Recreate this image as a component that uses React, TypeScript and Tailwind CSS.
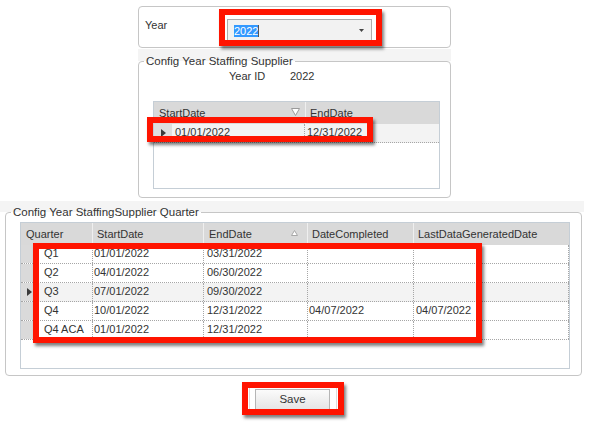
import React from 'react';

const rows = [
  { q: 'Q1', start: '01/01/2022', end: '03/31/2022', done: '', gen: '' },
  { q: 'Q2', start: '04/01/2022', end: '06/30/2022', done: '', gen: '' },
  { q: 'Q3', start: '07/01/2022', end: '09/30/2022', done: '', gen: '', focused: true },
  { q: 'Q4', start: '10/01/2022', end: '12/31/2022', done: '04/07/2022', gen: '04/07/2022' },
  { q: 'Q4 ACA', start: '01/01/2022', end: '12/31/2022', done: '', gen: '' },
];

function RowArrow() {
  return (
    <svg width="5" height="8" viewBox="0 0 5 8">
      <polygon points="0,0 5,4 0,8" fill="#3a3a3a" />
    </svg>
  );
}

function RedBox({ className }: { className: string }) {
  return (
    <div
      className={`absolute border-[6px] border-[#ff1400] shadow-[2px_3px_3px_rgba(0,0,0,0.5)] pointer-events-none ${className}`}
    />
  );
}

const cell = 'h-full border-r border-dotted border-[#a6a6a6] leading-[14px] pt-[1px] whitespace-nowrap overflow-hidden';
const head = 'h-full border-r border-[#efefef] leading-[14px] pt-[4px] whitespace-nowrap relative';

export default function App() {
  return (
    <div className="relative w-[591px] h-[425px] bg-white overflow-hidden text-[11px] text-[#333] font-['Liberation_Sans',Arial,sans-serif]">
      {/* Year selector */}
      <div className="ml-[138px] mt-[6px] w-[313px] h-[42px] border border-[#c6c6c6] rounded-[4px] flex items-start pt-[12px] pl-[6px]">
        <span className="w-[82px] leading-[13px]">Year</span>
        <div className="w-[145px] h-[23px] border border-[#acacac] bg-[#f2f2f2] flex items-center pl-[6px]">
          <span className="bg-[#3399ff] text-white leading-[12px] h-[12px]">2022</span>
          <span className="w-px h-[12px] bg-[#555]" />
          <svg className="ml-auto mr-[7px]" width="5" height="3" viewBox="0 0 5 3">
            <polygon points="0,0 5,0 2.5,3" fill="#444" />
          </svg>
        </div>
      </div>

      {/* Config Year Staffing Supplier */}
      <div className="ml-[138px] mt-px w-[313px] pt-[5px] bg-[linear-gradient(to_bottom,#f4f4f4_12px,#fff_12px)]">
        <fieldset className="m-0 p-0 pb-[8px] border border-[#c6c6c6] rounded-[4px] bg-white min-w-0">
          <legend className="ml-[5px] px-[2px] text-[11.5px] leading-[14px]">Config Year Staffing Supplier</legend>
          <div className="flex mt-[2px] ml-[90px] leading-[13px]">
            <span className="w-[61px]">Year ID</span>
            <span>2022</span>
          </div>
          <div className="ml-[14px] mt-[18px] w-[287px] h-[88px] border border-[#c5ced6]">
            <div className="flex h-[22px] bg-[#d9d9d9]">
              <div className={`${head} w-[152px] pl-[5px]`}>
                StartDate
                <svg className="absolute right-[5px] top-[6px]" width="9" height="8" viewBox="0 0 9 8">
                  <polygon points="0.5,0.5 8.5,0.5 4.5,7.5" fill="#fff" stroke="#9a9a9a" />
                </svg>
              </div>
              <div className={`${head} w-[133px] pl-[4px] border-r-0`}>EndDate</div>
            </div>
            <div className="flex h-[19px] bg-[#f3f3f3] border-b border-dotted border-[#a6a6a6]">
              <div className="w-[18px] h-full bg-[#dedede] flex items-center justify-center">
                <RowArrow />
              </div>
              <div className={`${cell} w-[133px] pl-[3px]`}>01/01/2022</div>
              <div className={`${cell} w-[134px] pl-[2px] border-r-0`}>12/31/2022</div>
            </div>
          </div>
        </fieldset>
      </div>

      {/* Config Year StaffingSupplier Quarter */}
      <div className="mt-[3px] w-[584px] pl-[5px] pt-[4px] bg-[linear-gradient(to_bottom,#f4f4f4_11px,#fff_11px)]">
        <fieldset className="m-0 p-0 pb-[6px] w-[577px] border border-[#c6c6c6] rounded-[4px] bg-white min-w-0">
          <legend className="ml-[5px] px-[2px] text-[11.5px] leading-[14px]">Config Year StaffingSupplier Quarter</legend>
          <div className="ml-[14px] mt-[3px] w-[550px] h-[147px] border border-[#c5ced6]">
            <div className="flex h-[22px] bg-[#d9d9d9]">
              <div className={`${head} w-[72px] pl-[5px]`}>Quarter</div>
              <div className={`${head} w-[111px] pl-[4px]`}>StartDate</div>
              <div className={`${head} w-[104px] pl-[5px]`}>
                EndDate
                <svg className="absolute right-[9px] top-[7px]" width="7" height="6" viewBox="0 0 7 6">
                  <polygon points="3.5,0.5 6.5,5.5 0.5,5.5" fill="#fff" stroke="#a8a8a8" />
                </svg>
              </div>
              <div className={`${head} w-[106px] pl-[4px]`}>DateCompleted</div>
              <div className={`${head} w-[155px] pl-[4px] border-r-0`}>LastDataGeneratedDate</div>
            </div>
            {rows.map((r) => (
              <div
                key={r.q}
                className={`flex h-[19px] border-b border-dotted border-[#a6a6a6] ${r.focused ? 'bg-[#f3f3f3]' : 'bg-white'}`}
              >
                <div className="w-[18px] h-full bg-[#dadada] border-r border-dotted border-[#a6a6a6] flex items-center justify-center">
                  {r.focused && <RowArrow />}
                </div>
                <div className={`${cell} w-[54px] pl-[5px]`}>{r.q}</div>
                <div className={`${cell} w-[111px] pl-px`}>{r.start}</div>
                <div className={`${cell} w-[104px] pl-[3px]`}>{r.end}</div>
                <div className={`${cell} w-[106px] pl-px`}>{r.done}</div>
                <div className={`${cell} w-[155px] pl-[2px]`}>{r.gen}</div>
              </div>
            ))}
          </div>
        </fieldset>
      </div>

      {/* Save */}
      <div className="ml-[249px] mt-[11px] w-[88px] h-[26px] border border-[#dcdcdc] pt-px pl-[5px]">
        <button className="block w-[75px] h-[22px] border border-[#b5b5b5] bg-[linear-gradient(to_bottom,#fbfbfb,#e4e4e4)] text-[11.5px] text-[#333]">
          Save
        </button>
      </div>

      {/* Annotation boxes */}
      <RedBox className="left-[219px] top-[9px] w-[163px] h-[37px]" />
      <RedBox className="left-[147px] top-[117px] w-[226px] h-[25px]" />
      <RedBox className="left-[33px] top-[243px] w-[449px] h-[100px]" />
      <RedBox className="left-[242px] top-[382px] w-[102px] h-[33px]" />
    </div>
  );
}
